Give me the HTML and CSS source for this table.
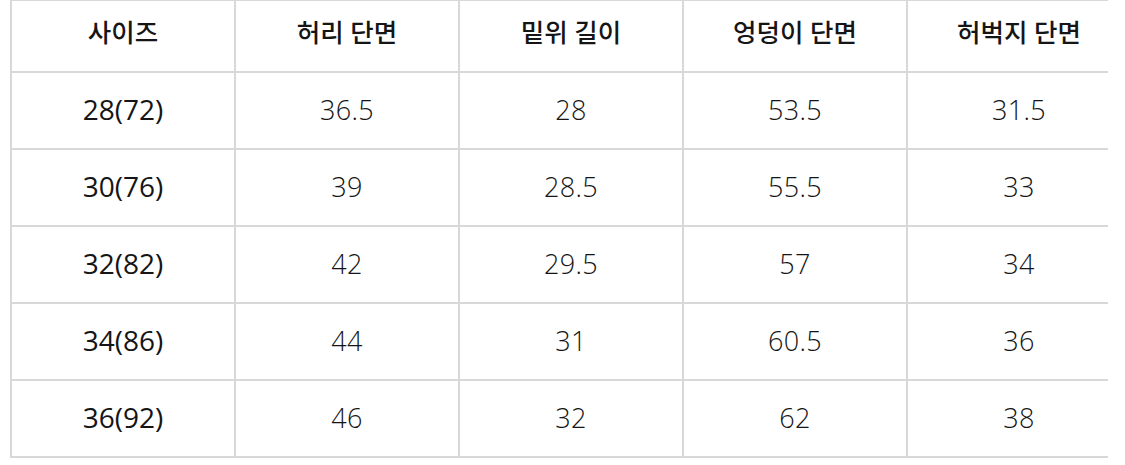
FILE: index.html
```html
<!DOCTYPE html>
<html lang="ko">
<head>
<meta charset="utf-8">
<link rel="stylesheet" href="styles.css">
</head>
<body>
<div class="wrap">
<table class="size-table">
<thead>
<tr><th>사이즈</th><th>허리 단면</th><th>밑위 길이</th><th>엉덩이 단면</th><th>허벅지 단면</th></tr>
</thead>
<tbody>
<tr><th>28(72)</th><td>36.5</td><td>28</td><td>53.5</td><td>31.5</td></tr>
<tr><th>30(76)</th><td>39</td><td>28.5</td><td>55.5</td><td>33</td></tr>
<tr><th>32(82)</th><td>42</td><td>29.5</td><td>57</td><td>34</td></tr>
<tr><th>34(86)</th><td>44</td><td>31</td><td>60.5</td><td>36</td></tr>
<tr><th>36(92)</th><td>46</td><td>32</td><td>62</td><td>38</td></tr>
</tbody>
</table>
</div>
</body>
</html>
```
FILE: styles.css
```css
html, body {
  margin: 0;
  padding: 0;
  background: #ffffff;
}
.wrap {
  margin-left: 10px;
  margin-top: -1px;
  width: 1098px;
  overflow: hidden;
}
.size-table {
  border-collapse: collapse;
  table-layout: fixed;
  width: 1122px;
  font-family: "Open Sans", "Noto Sans CJK KR", sans-serif;
  color: #151515;
}
.size-table th,
.size-table td {
  border: 2px solid #d8d8d8;
  text-align: center;
  vertical-align: middle;
  padding: 0 0 3px;
  height: 72px;
  font-size: 27px;
  font-weight: 350;
  letter-spacing: 0.3px;
}
.size-table thead th {
  height: 59px;
  font-size: 25.5px;
  font-weight: 500;
  letter-spacing: 0;
  padding-bottom: 11px;
}
.size-table tbody th {
  font-size: 28px;
  font-weight: 400;
  letter-spacing: 0;
}
```
